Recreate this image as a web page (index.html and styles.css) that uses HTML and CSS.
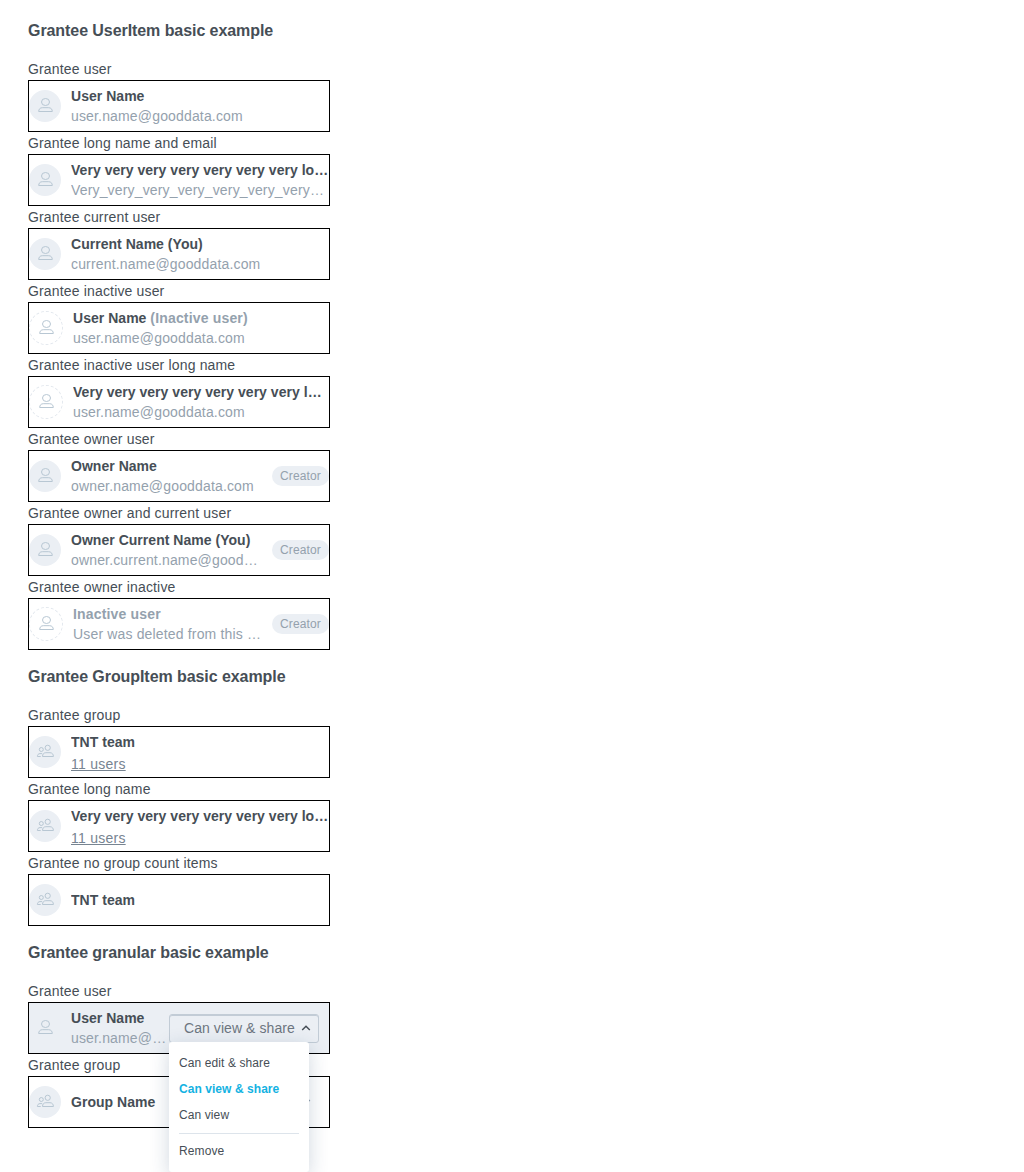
FILE: index.html
```html
<!DOCTYPE html>
<html lang="en">
<head>
<meta charset="utf-8">
<title>Grantee items</title>
<link rel="stylesheet" href="styles.css">
</head>
<body>
<svg class="defs" width="0" height="0">
  <symbol id="user" viewBox="0 0 16 16"><ellipse cx="8.5" cy="4" rx="4" ry="3.5"/><path d="M1.7 13.5C1.7 11.3 3 9.7 5.3 9.7H11.7C14 9.7 15.3 11.3 15.3 13.5Z"/></symbol>
  <symbol id="group" viewBox="0 0 18 16"><circle cx="11.7" cy="3.8" r="2.6"/><circle cx="5.3" cy="5.5" r="2"/><path d="M6.5 12.5C6.5 10.2 7.8 8.7 9.8 8.7H14C16.1 8.7 17.4 10.2 17.4 12.5ZM4.7 12.5H1.4C1.4 10.7 2.4 9.6 4 9.6H6.2"/></symbol>
</svg>
<main class="page">
  <h2>Grantee UserItem basic example</h2>
  <div class="label">Grantee user</div>
  <div class="item"><span class="avatar"><svg class="user"><use href="#user"/></svg></span><div class="content"><div class="name">User Name</div><div class="email">user.name@gooddata.com</div></div></div>
  <div class="label">Grantee long name and email</div>
  <div class="item"><span class="avatar"><svg class="user"><use href="#user"/></svg></span><div class="content"><div class="name">Very very very very very very very long name</div><div class="email">Very_very_very_very_very_very_very_long@gooddata.com</div></div></div>
  <div class="label">Grantee current user</div>
  <div class="item"><span class="avatar"><svg class="user"><use href="#user"/></svg></span><div class="content"><div class="name">Current Name (You)</div><div class="email">current.name@gooddata.com</div></div></div>
  <div class="label">Grantee inactive user</div>
  <div class="item"><span class="avatar inactive"><svg class="user"><use href="#user"/></svg></span><div class="content"><div class="name">User Name <span class="muted">(Inactive user)</span></div><div class="email">user.name@gooddata.com</div></div></div>
  <div class="label">Grantee inactive user long name</div>
  <div class="item"><span class="avatar inactive"><svg class="user"><use href="#user"/></svg></span><div class="content"><div class="name">Very very very very very very very long name</div><div class="email">user.name@gooddata.com</div></div></div>
  <div class="label">Grantee owner user</div>
  <div class="item"><span class="avatar"><svg class="user"><use href="#user"/></svg></span><div class="content"><div class="name">Owner Name</div><div class="email">owner.name@gooddata.com</div></div><span class="pill">Creator</span></div>
  <div class="label">Grantee owner and current user</div>
  <div class="item"><span class="avatar"><svg class="user"><use href="#user"/></svg></span><div class="content"><div class="name">Owner Current Name (You)</div><div class="email">owner.current.name@gooddata.com</div></div><span class="pill">Creator</span></div>
  <div class="label">Grantee owner inactive</div>
  <div class="item"><span class="avatar inactive"><svg class="user"><use href="#user"/></svg></span><div class="content"><div class="name muted">Inactive user</div><div class="email">User was deleted from this organization</div></div><span class="pill">Creator</span></div>

  <h2>Grantee GroupItem basic example</h2>
  <div class="label">Grantee group</div>
  <div class="item"><span class="avatar"><svg class="group"><use href="#group"/></svg></span><div class="content"><div class="name">TNT team</div><a class="count">11 users</a></div></div>
  <div class="label">Grantee long name</div>
  <div class="item"><span class="avatar"><svg class="group"><use href="#group"/></svg></span><div class="content"><div class="name">Very very very very very very very long name</div><a class="count">11 users</a></div></div>
  <div class="label">Grantee no group count items</div>
  <div class="item"><span class="avatar"><svg class="group"><use href="#group"/></svg></span><div class="content"><div class="name">TNT team</div></div></div>

  <h2>Grantee granular basic example</h2>
  <div class="label">Grantee user</div>
  <div class="item active"><span class="avatar"><svg class="user"><use href="#user"/></svg></span><div class="content"><div class="name">User Name</div><div class="email">user.name@gooddata.com</div></div>
    <div class="select open">Can view &amp; share<svg class="chevron" viewBox="0 0 10 6"><path d="M1.2 5 5 1.3 8.8 5"/></svg>
      <div class="menu">
        <div class="option">Can edit &amp; share</div>
        <div class="option selected">Can view &amp; share</div>
        <div class="option">Can view</div>
        <div class="divider"></div>
        <div class="option">Remove</div>
      </div>
    </div>
  </div>
  <div class="label">Grantee group</div>
  <div class="item"><span class="avatar"><svg class="group"><use href="#group"/></svg></span><div class="content"><div class="name">Group Name</div></div>
    <div class="select"><svg class="chevron" viewBox="0 0 10 6"><path d="M1.2 1 5 4.7 8.8 1"/></svg></div>
  </div>
</main>
</body>
</html>
```
FILE: styles.css
```css
* { box-sizing: border-box; }
body {
  margin: 0;
  min-height: 1172px;
  background: #fff;
  color: #464e56;
  font: 14px/20px "Liberation Sans", Arial, sans-serif;
  letter-spacing: .16px;
}
.defs { position: absolute; }
.page { width: 302px; margin-left: 28px; padding-top: 4px; }
h2 { margin: 0; padding: 15px 0; font-size: 16px; line-height: 24px; letter-spacing: -.07px; white-space: nowrap; }
.label { height: 22px; line-height: 22px; }
.item {
  display: flex;
  align-items: center;
  height: 52px;
  border: 1px solid #000;
}
.avatar {
  display: flex;
  flex: none;
  align-items: center;
  justify-content: center;
  width: 32px;
  height: 32px;
  margin-right: 10px;
  border-radius: 50%;
  background: #ebeff4;
}
.avatar.inactive { width: 34px; height: 34px; border: 1px dashed #e3e8ee; background: none; }
.avatar svg { fill: none; stroke: #b8c7d3; stroke-width: 1; }
.user { width: 16px; height: 16px; }
.group { width: 18px; height: 16px; }
.content { flex: 1; min-width: 0; }
.name, .email { overflow: hidden; white-space: nowrap; text-overflow: ellipsis; }
.name { font-weight: bold; letter-spacing: .03px; }
.name .muted, .name.muted { letter-spacing: .17px; }
.email, .muted { color: #94a1ad; }
.count { display: block; height: 20px; line-height: 24px; letter-spacing: .25px; color: #778491; text-decoration: underline; }
.pill {
  flex: none;
  margin-left: 10px;
  padding: 0 8px;
  border-radius: 10px;
  background: #ebeff4;
  color: #94a1ad;
  font-size: 12px;
  line-height: 20px;
  letter-spacing: .13px;
}
.active { background: #ebeff4; }
.select {
  position: relative;
  display: flex;
  flex: none;
  align-items: center;
  justify-content: space-between;
  width: 150px;
  height: 29px;
  margin-right: 10px;
  padding: 0 7px 0 14px;
  border: 1px solid transparent;
  color: #6d7680;
  letter-spacing: .07px;
}
.select.open { border-color: #c2ccd6; border-radius: 3px; box-shadow: inset 0 1px 0 #c2ccd6; }
.chevron { width: 10px; height: 6px; margin-left: auto; fill: none; stroke: #94a1ad; stroke-width: 1.5; }
.open .chevron { stroke: #464e56; }
.menu {
  position: absolute;
  z-index: 1;
  top: 27px;
  left: -1px;
  width: 140px;
  height: 130px;
  padding: 8px 10px;
  border-radius: 3px;
  background: #fff;
  box-shadow: 0 5px 20px rgba(20, 56, 93, .2);
  color: #464e56;
  font-size: 12px;
  letter-spacing: .1px;
}
.option { height: 26px; line-height: 26px; }
.selected { color: #14b2e2; font-weight: bold; letter-spacing: .06px; }
.divider { height: 1px; margin: 5px 0 4px; background: #dde4eb; }
```
